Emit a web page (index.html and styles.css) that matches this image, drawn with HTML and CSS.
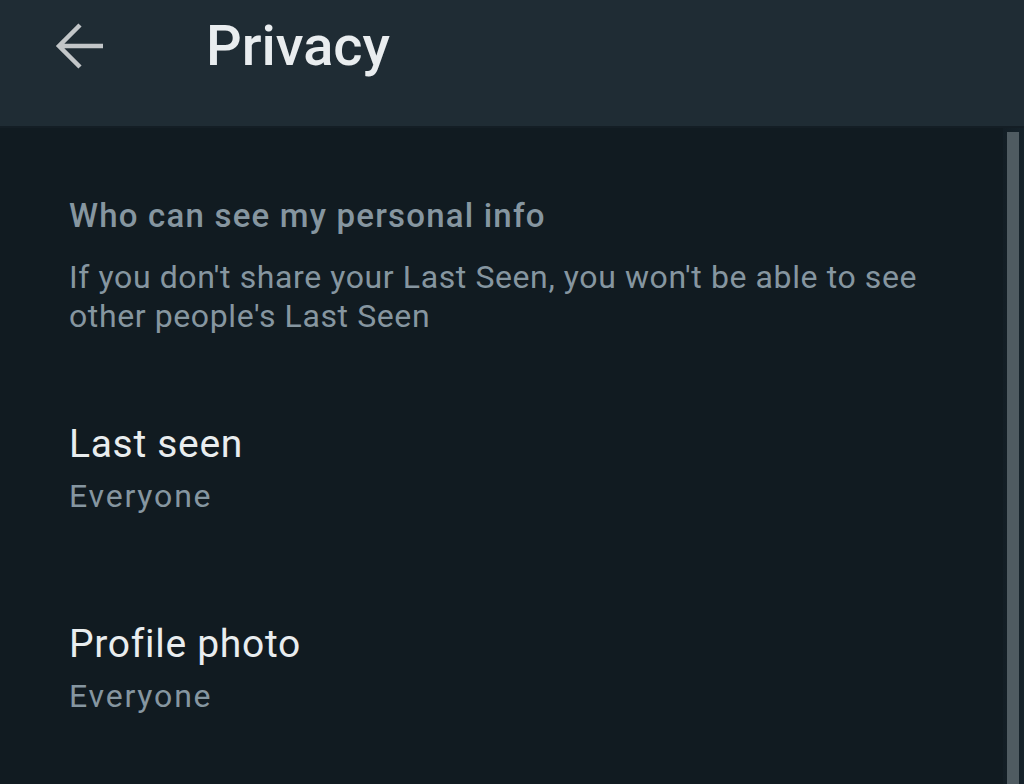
FILE: index.html
```html
<!DOCTYPE html>
<html>
	<head>
		<meta charset="utf-8" />
		<title>Privacy</title>
		<link rel="stylesheet" href="styles.css">
	</head>
	<body>
		<div class="topbar">
			<div class="back">
				<svg width="50" height="50" viewBox="0 0 50 50">
					<path d="M49 23H5M26 2L5 23l21 21" fill="none" stroke="#c2c6c8" stroke-width="4.5" />
				</svg>
			</div>
			<div class="title">Privacy</div>
		</div>
		<div class="main">
			<div class="content">
				<div class="section">
					<div class="section-title">Who can see my personal info</div>
					<div class="section-desc">If you don't share your Last Seen, you won't be able to see other people's Last Seen</div>
				</div>
				<div class="item">
					<div class="item-name">Last seen</div>
					<div class="item-value">Everyone</div>
				</div>
				<div class="item">
					<div class="item-name">Profile photo</div>
					<div class="item-value">Everyone</div>
				</div>
			</div>
			<div class="track">
				<div class="scrollbar"></div>
			</div>
		</div>
	</body>
</html>
```

FILE: styles.css
```css
body{
	margin: 0;
	background: #111b21;
	font-family: Roboto, "Liberation Sans", sans-serif;
	height: 784px;
	overflow: hidden;
	display: flex;
	flex-direction: column;
}
.topbar{
	height: 128px;
	flex: none;
	background: #1f2c34;
	display: flex;
	align-items: center;
	padding-bottom: 30px;
	box-sizing: border-box;
	border-bottom: 2px solid #141e25;
}
.back{
	width: 50px;
	height: 50px;
	margin-left: 54px;
}
.back svg{
	display: block;
}
.title{
	margin-left: 102px;
	margin-top: -4px;
	font-size: 56px;
	font-weight: 500;
	color: #e9edef;
}
.main{
	flex: 1;
	display: flex;
}
.content{
	flex: 1;
	padding: 0 69px;
}
.track{
	width: 21px;
	padding: 4px 5px 0 4px;
	box-sizing: border-box;
	background: linear-gradient(to right, #131e25, #15222a);
}
.scrollbar{
	height: 100%;
	background: #4f5b61;
}
.section{
	padding-top: 68px;
}
.section-title{
	font-size: 33px;
	font-weight: 500;
	letter-spacing: 1.2px;
	color: #8696a0;
	line-height: 40px;
}
.section-desc{
	margin-top: 22px;
	font-size: 32px;
	letter-spacing: 0.6px;
	line-height: 39px;
	color: #8696a0;
}
.item{
	margin-top: 84px;
}
.item + .item{
	margin-top: 100px;
}
.item-name{
	font-size: 39px;
	letter-spacing: 0.7px;
	line-height: 48px;
	color: #e9edef;
}
.item-value{
	font-size: 32px;
	letter-spacing: 1.8px;
	line-height: 48px;
	margin-top: 4px;
	color: #8696a0;
}
```
